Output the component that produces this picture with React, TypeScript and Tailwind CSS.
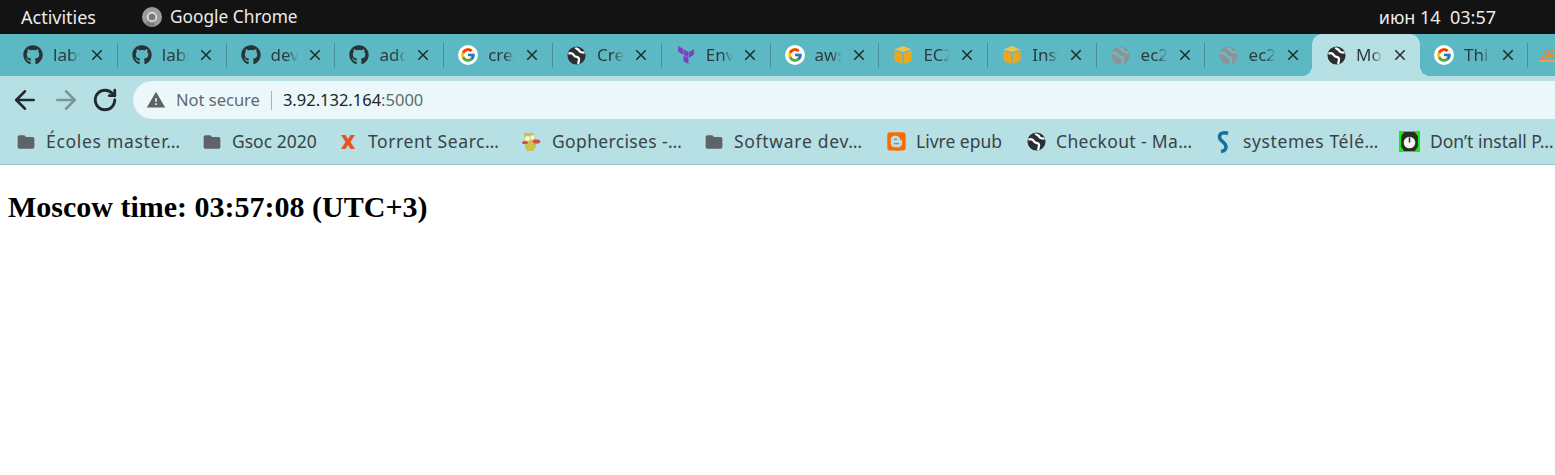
import React from "react";
import { FaGithub, FaBlogger } from "react-icons/fa6";
import { FcGoogle } from "react-icons/fc";
import { SiTerraform } from "react-icons/si";
import { MdFolder, MdClose, MdWarning } from "react-icons/md";
import { ArrowLeft, ArrowRight, RotateCw } from "lucide-react";

const ChromeIcon = () => (
    <svg viewBox="0 0 20 20" className="w-5 h-5">
        <circle cx="10" cy="10" r="10" fill="#9c9c9c" />
        <path d="M3 17a10 10 0 0 0 10 2.500l-1-5a4.500 4.500 0 0 1-6-1z" fill="#7f7f7f" />
        <circle cx="10" cy="10" r="4.300" fill="#7a7a7a" stroke="#ececec" strokeWidth="1.500" />
    </svg>
);

const GoogleIcon = () => (
    <span className="w-5 h-5 rounded-full bg-white flex items-center justify-center">
        <FcGoogle className="w-4 h-4" />
    </span>
);

const BoxIcon = () => (
    <svg viewBox="0 0 20 20" className="w-5 h-5">
        <path d="M1.500 4.500 10 1l8.500 3.500L10 7z" fill="#f2c14e" />
        <path d="M1.500 5.500 9.300 8.500V19L1.500 16z" fill="#efa61f" />
        <path d="M18.500 5.500 10.700 8.500V19l7.800-3z" fill="#efa61f" />
    </svg>
);

const GopherIcon = () => (
    <svg viewBox="0 0 20 20" className="w-5 h-5 -ml-[2px]">
        <path d="M3 1h9l3 6v8l-3 4H6l-2-4z" fill="#c9c34e" />
        <circle cx="6.500" cy="6.500" r="2.600" fill="#f4f0ee" />
        <circle cx="11.500" cy="5.500" r="2.200" fill="#f4f0ee" />
        <ellipse cx="15.500" cy="9.500" rx="3.800" ry="2" fill="#d8494b" />
        <ellipse cx="4" cy="10.500" rx="3" ry="1.600" fill="#d8494b" />
    </svg>
);

const TorrentIcon = () => (
    <svg viewBox="0 0 16 16" className="w-4 h-4 -ml-[1px]">
        <path d="M1 1h4.500L8 5l2.500-4H15l-4.500 7 4.500 7h-4.500L8 11l-2.500 4H1l4.500-7z" fill="#e8541e" />
    </svg>
);

const SystemesIcon = () => (
    <svg viewBox="0 0 14 22" className="w-[14px] h-[22px]">
        <path d="M12 2.500C8 1 3.500 2 3.500 6c0 4.500 6.500 5 6.500 10 0 2.500-2 4-5 4.500" fill="none" stroke="#16709c" strokeWidth="3.500" />
    </svg>
);

const ClockIcon = () => (
    <svg viewBox="0 0 20 20" className="w-[21px] h-[21px] -ml-[1px] shrink-0">
        <rect width="20" height="20" fill="#0cf00c" />
        <path d="M5 1h10l3 4v10l-3 4H5l-3-4V5z" fill="#2d2a26" />
        <circle cx="10" cy="11" r="5.500" fill="#f6f6f0" />
        <rect x="9.300" y="6" width="1.400" height="5" fill="#2d2a26" />
    </svg>
);

const SunIcon = () => (
    <svg viewBox="0 0 20 20" className="w-5 h-5">
        <path d="M1 15 6 13M3 10l4 3M6 6l3 6M10 4l1 8M15 4l-3 8M19 8l-6 5" stroke="#ea8a2c" strokeWidth="1.500" />
        <rect x="1" y="15" width="18" height="2" fill="#ea9a5c" />
    </svg>
);

const Globe = ({ muted }: { muted?: boolean }) => (
    <svg viewBox="0 0 20 20" className="w-[19px] h-[19px] shrink-0">
        <circle cx="10" cy="10" r="9.500" fill={muted ? "#8c9498" : "#2a2f33"} />
        <path
            d="M1.500 8c3-1 5 0 6 2s4 1 5 3-1 3-.5 6M9 1.500c.5 2 3.500 1.500 4 3.500s3 2 5.500 2"
            fill="none"
            stroke={muted ? "#6fbac3" : "#ffffff"}
            strokeWidth="2.400"
        />
    </svg>
);

const Github = () => <FaGithub className="w-5 h-5 text-[#2a3236]" />;

const tabs = [
    { title: "labs", width: "w-[108.800px]", icon: <Github /> },
    { title: "labs", width: "w-[108.800px]", icon: <Github /> },
    { title: "dev", width: "w-[108.800px]", icon: <Github /> },
    { title: "add", width: "w-[108.800px]", icon: <Github /> },
    { title: "crea", width: "w-[108.800px]", icon: <GoogleIcon /> },
    { title: "Cre", width: "w-[108.800px]", icon: <Globe /> },
    { title: "Env", width: "w-[108.800px]", icon: <SiTerraform className="w-[18px] h-[18px] text-[#7b42bc]" /> },
    { title: "aws", width: "w-[108.800px]", icon: <GoogleIcon /> },
    { title: "EC2", width: "w-[108.800px]", icon: <BoxIcon /> },
    { title: "Inst", width: "w-[108.400px]", icon: <BoxIcon /> },
    { title: "ec2", width: "w-[108px]", icon: <Globe muted /> },
    { title: "ec2", width: "w-[107.500px]", icon: <Globe muted /> },
    { title: "Mo", width: "w-[108px]", icon: <Globe />, active: true },
    { title: "This", width: "w-[108px]", icon: <GoogleIcon /> },
];

const folder = <MdFolder className="w-5 h-5 text-[#5f6368]" />;

const bookmarks = [
    { title: "Écoles master…", width: "w-[135px] tracking-[0.7px]", icon: folder },
    { title: "Gsoc 2020", width: "w-[85px]", icon: folder },
    { title: "Torrent Searc…", width: "w-[133px] tracking-[0.6px]", icon: <TorrentIcon /> },
    { title: "Gophercises -…", width: "w-[131px] tracking-[0.35px]", icon: <GopherIcon /> },
    { title: "Software dev…", width: "w-[131px] tracking-[0.7px]", icon: folder },
    { title: "Livre epub", width: "w-[89px]", icon: <FaBlogger className="w-[21px] h-[21px] shrink-0 text-[#ff6a00]" /> },
    { title: "Checkout - Ma…", width: "w-[136px] tracking-[0.35px]", icon: <Globe /> },
    { title: "systemes Télé…", width: "w-[136px] tracking-[0.6px]", icon: <SystemesIcon /> },
    { title: "Don’t install P…", width: "w-[130px]", icon: <ClockIcon /> },
];

const Tab = ({ title, icon, width, active }: { title: string; icon: React.ReactNode; width: string; active?: boolean }) => (
    <div
        className={
            active
                ? `${width} relative shrink-0 h-[42px] flex items-center pl-[14px] bg-[#b6e0e4] rounded-t-[10px] before:absolute before:left-[-10px] before:bottom-0 before:w-[10px] before:h-[10px] before:bg-[radial-gradient(circle_at_0_0,transparent_10px,#b6e0e4_10px)] after:absolute after:right-[-10px] after:bottom-0 after:w-[10px] after:h-[10px] after:bg-[radial-gradient(circle_at_100%_0,transparent_10px,#b6e0e4_10px)]`
                : `${width} shrink-0 h-[42px] flex items-center pl-[14px]`
        }
    >
        <span className="w-5 h-5 flex items-center justify-center shrink-0">{icon}</span>
        <span className="ml-[10px] w-[27px] overflow-hidden whitespace-nowrap text-[17px] text-[#2f3a3f] [mask-image:linear-gradient(to_right,black_60%,transparent)]">
            {title}
        </span>
        <MdClose className="ml-[8px] w-[18px] h-[18px] text-[#23292c] shrink-0" />
    </div>
);

const App = () => {
    return (
        <div className="h-[475px] w-[1555px] overflow-hidden bg-white flex flex-col font-['Noto_Sans',sans-serif]">
            <div className="h-[34px] bg-[#131313] flex items-center text-[17.300px] text-[#ececec]">
                <span className="ml-[21px] w-[76px] text-[18px]">Activities</span>
                <span className="ml-[45px]">
                    <ChromeIcon />
                </span>
                <span className="ml-2">Google Chrome</span>
                <span className="ml-auto mr-[59px] whitespace-pre text-[18px]">июн 14  03:57</span>
            </div>

            <div className="h-[42px] bg-[#5cb8c2] flex items-center pl-[9px] overflow-hidden">
                {tabs.map((tab, i) => (
                    <React.Fragment key={i}>
                        <Tab title={tab.title} icon={tab.icon} width={tab.width} active={tab.active} />
                        {i < tabs.length - 1 && i !== 11 && i !== 12 ? (
                            <div className="w-0 h-[25px] -ml-px border-l border-[#4a8f98]" />
                        ) : null}
                    </React.Fragment>
                ))}
                <div className="w-0 h-[25px] -ml-px border-l border-[#4a8f98]" />
                <div className="ml-[10px] shrink-0">
                    <SunIcon />
                </div>
            </div>

            <div className="h-[43px] bg-[#b6e0e4] flex items-end">
                <div className="h-[38px] w-[133px] flex items-center pl-[10px] gap-[11px] shrink-0">
                    <ArrowLeft className="w-[30px] h-[30px] text-[#23292c] shrink-0" strokeWidth={2} />
                    <ArrowRight className="w-[30px] h-[30px] text-[#7d9599] shrink-0" strokeWidth={2} />
                    <RotateCw className="w-[26px] h-[26px] text-[#23292c] shrink-0" strokeWidth={2.600} />
                </div>
                <div className="h-[38px] flex-1 bg-[#ebf7f8] rounded-l-full flex items-center pl-[13px] text-[16.500px]">
                    <MdWarning className="w-5 h-5 text-[#5f6368]" />
                    <span className="ml-[10px] text-[#5f6a70]">Not secure</span>
                    <span className="ml-[11px] h-[19px] border-l border-[#a3b5b8]" />
                    <span className="ml-[11px] text-[#20262a]">3.92.132.164</span>
                    <span className="text-[#5f6a70]">:5000</span>
                </div>
            </div>

            <div className="h-[46px] bg-[#b6e0e4] border-b border-[#9bbfc3] flex items-center pl-[16px] gap-[21px] overflow-hidden">
                {bookmarks.map((b) => (
                    <div key={b.title} className="flex items-center gap-[10px] shrink-0">
                        <span className="w-5 h-5 flex items-center justify-center">{b.icon}</span>
                        <span className={`${b.width} overflow-hidden whitespace-nowrap text-[17.500px] text-[#3a4347]`}>
                            {b.title}
                        </span>
                    </div>
                ))}
            </div>

            <h2 className="mt-[26px] ml-2 font-['Liberation_Serif',serif] font-bold text-[30px] leading-[32px] text-black">
                Moscow time: 03:57:08 (UTC+3)
            </h2>
        </div>
    );
};

export default App;
